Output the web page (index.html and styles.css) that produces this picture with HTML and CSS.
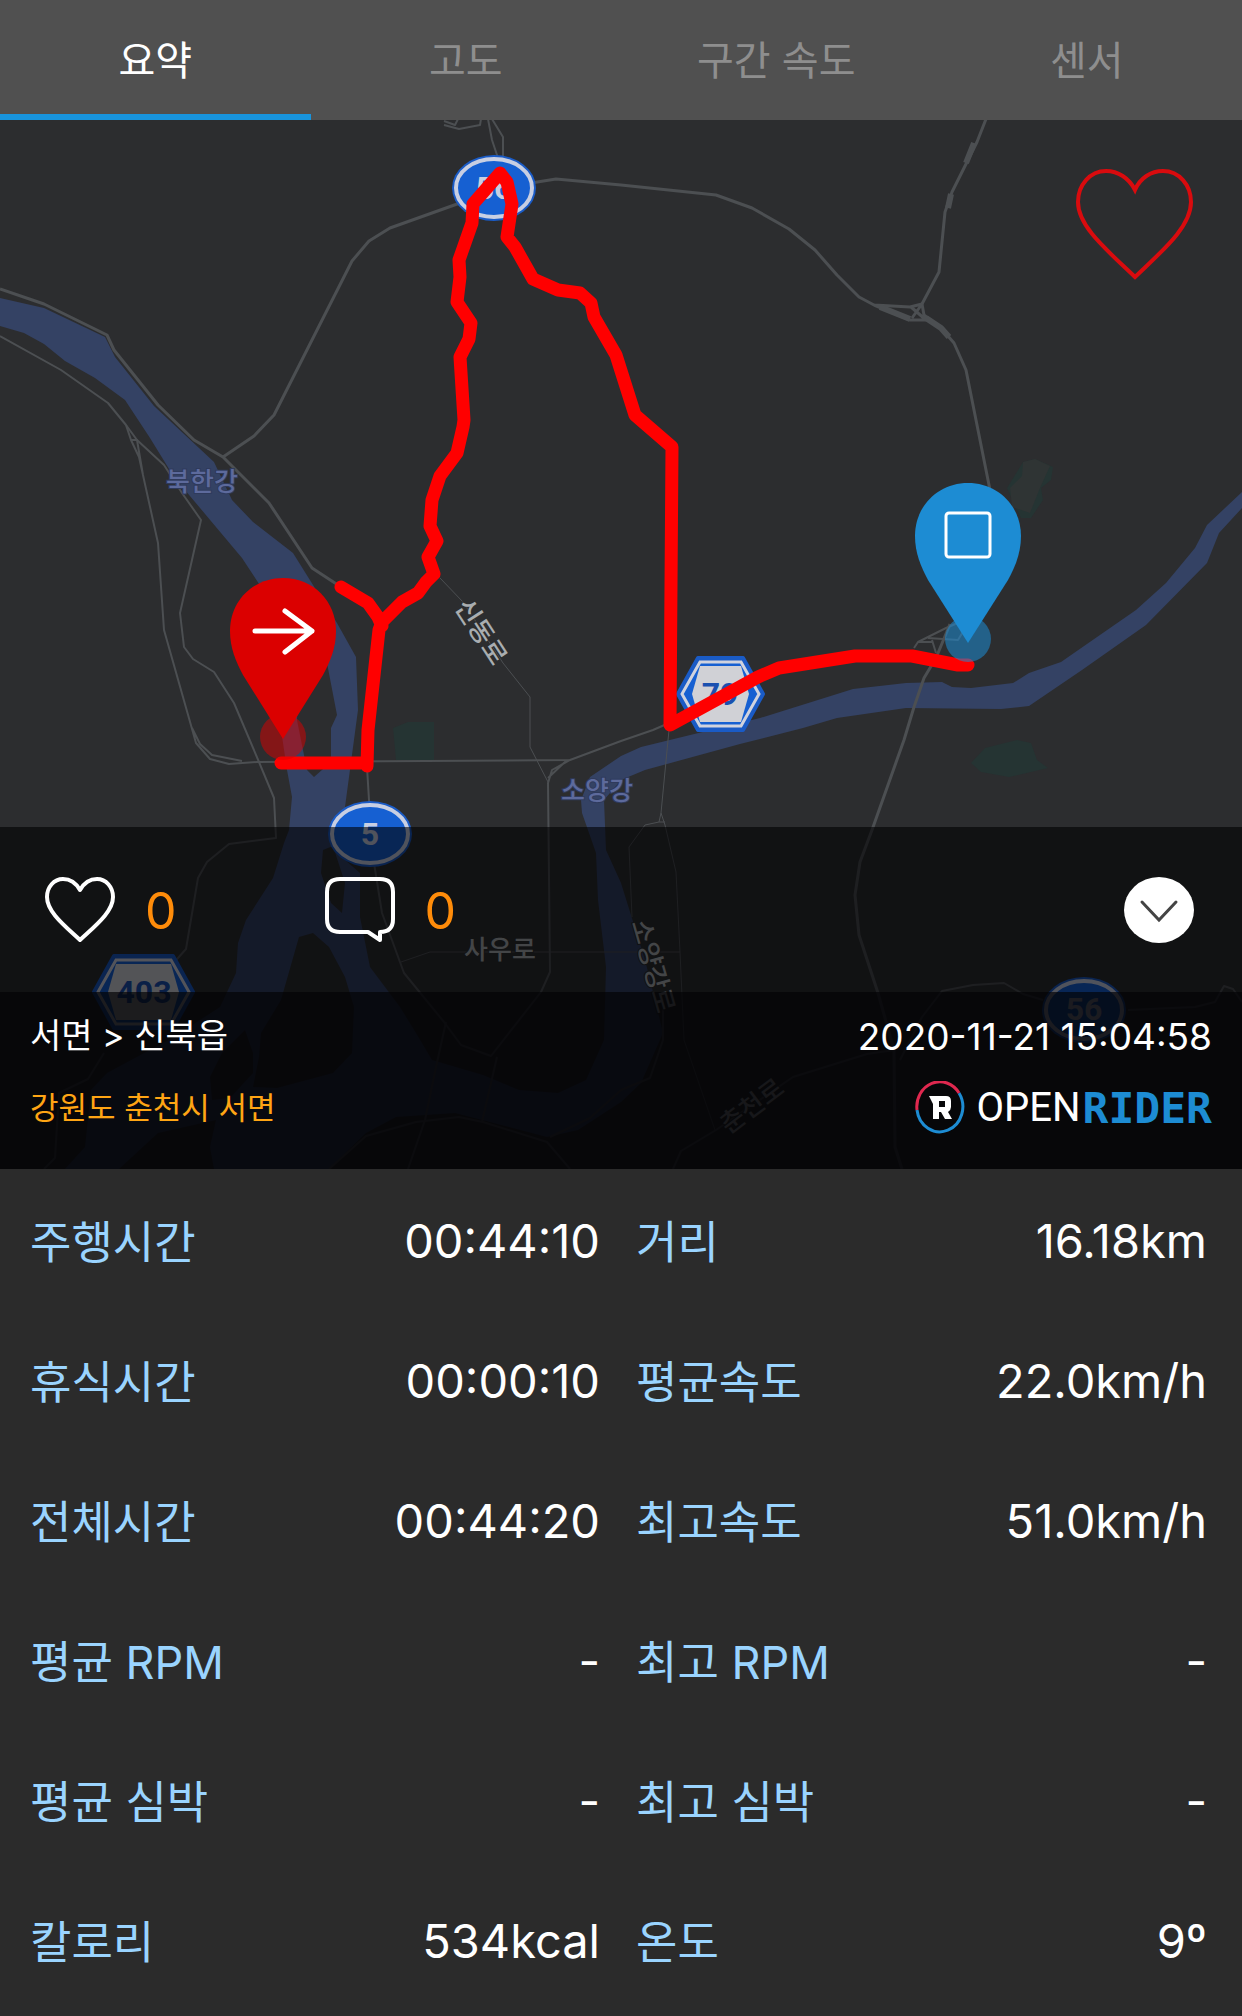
FILE: index.html
```html
<!DOCTYPE html>
<html lang="ko">
<head>
<meta charset="utf-8">
<meta name="viewport" content="width=device-width, initial-scale=1">
<title>오픈라이더 주행 요약</title>
<link rel="stylesheet" href="styles.css">
</head>
<body>
<nav class="tabs">
  <button class="tab tab-active" type="button">요약</button>
  <button class="tab" type="button">고도</button>
  <button class="tab" type="button">구간 속도</button>
  <button class="tab" type="button">센서</button>
</nav>

<main>
<section class="map">
  <svg class="map-canvas" viewBox="0 120 1242 1049" aria-label="주행 경로 지도">
    <!-- parks -->
    <g class="park">
      <path d="M393 728 408 722H434V760H396Z"/>
      <path d="M1023 462 1035 459 1053 467 1051 480 1041 488 1043 500 1031 518H1021L1007 488Z"/>
      <path d="M971 763 985 748 1017 740 1031 743 1037 760 1048 768 1009 777 981 772Z"/>
    </g>
    <path class="park-inner" d="M1023 462 1035 459 1050 466 1040 488 1030 513 1012 507 1010 488 1022 476Z"/>

    <!-- rivers -->
    <path class="river" fill-rule="evenodd" d="M0 298 44 308 105 337 115 357 154 406 214 462 232 500 253 522 293 553 313 585 337 623 356 657 358 710 345 807 345 860 360 873 360 917 370 967 400 1007 416 1033 432 1060 483 1075 519 1090 558 1093 586 1080 604 1040 606 967 598 900 596 853 582 813 581 800 590 777 621 756 641 747 760 718 853 689 906 683 942 682 952 687 971 688 1013 683 1029 673 1061 662 1136 610 1166 583 1195 548 1207 525 1242 492V508L1219 533 1207 563 1146 625 1082 670 1029 706 1001 709 906 708 837 718 803 728 740 744 645 770 621 780 604 800 606 850 621 883 645 960 655 1000 663 1033 641 1083 621 1102 578 1130 547 1137 455 1113 396 1117 366 1133 329 1169H65L85 1147 91 1090 107 1073 174 1037 220 1007 236 973 238 943 246 920 273 878 284 843 289 830 292 797 287 770 283 743 261 587 242 558 174 477 150 438 125 400 95 378 65 361 44 344 24 333 0 326Z
      M300 630 327 663 337 715 331 728V762L314 777 307 770 297 720Z
      M323 850 333 846 345 883 342 913 331 903 321 873Z
      M299 937 313 933 329 947 345 977 354 1007 352 1053 333 1073 277 1088 253 1087 259 1057 261 1033 281 1000Z
      M245 1030 222 1053 210 1077 212 1100 230 1098 253 1073V1053Z
      M216 1120 158 1133 119 1169H214L210 1147Z"/>

    <!-- roads -->
    <g class="road">
      <path d="M444 125 459 129 480 125 481 119M444 121 455 125 458 119M488 119 492 140 498 158M492 119 503 137V158"/>
      <path class="road-major" d="M531 183 556 179 621 185 716 195 752 208 789 229 815 250 837 275 859 297 874 305 910 307 922 304M874 305 910 320H926L911 307M912 318 922 304 924 315 941 328 954 343 966 370 976 420 990 490"/>
      <path class="road-major" d="M986 119 977 142 952 192 945 212 939 272 922 304"/>
      <path class="road-thick" d="M974 143 966 163M951 194 948 208M926 318 941 328 949 337M880 307 910 319"/>
      <path class="road-major" d="M460 203 390 228 369 241 352 261 274 415 254 436 223 457"/>
      <path class="road-major" d="M0 289 44 304 107 335 114 350 158 405 194 440 223 457 269 503 312 568 341 587"/>
      <path d="M0 336 61 370 108 403 126 425 137 440 164 465 182 493 201 520 180 613 184 647 193 659 214 672 234 703 259 762 274 798 276 838 229 844 207 862 198 878 186 949 170 967M104 1053 88 1079 59 1093 55 1158 44 1169"/>
      <path d="M126 425 131 440 139 457 158 543 164 630 196 743 210 759 229 764 257 762 570 760 621 741 653 730 669 723M131 440H137L143 475M192 728 200 744 212 755 242 761"/>
      <path d="M367 767 369 800 374 863 382 913 404 973 444 1022 461 1045 491 1056 541 992 550 972 548 783 552 770 570 760M548 778 566 761"/>
      <path class="road-minor" d="M440 578 463 602 503 663 530 697V747L548 782"/>
      <path class="road-minor" d="M401 962 430 952H680M669 730 661 813 659 822 645 825 629 847 632 917M661 813 665 825 676 872 680 952 684 1040 715 1130M659 822H665"/>
      <path class="road-major" d="M950 624 936 658 924 678 914 707 904 740 872 830 860 862 855 895 859 935 878 993 894 1050 895 1147 902 1169"/>
      <path d="M914 648 918 642 946 628 960 622M928 638 958 640 964 630M932 640 936 653M918 642H932"/>
      <path d="M894 1050 867 1054 793 1077 716 1130 681 1151 673 1169M900 1060 922 1017 942 991 973 985 1004 983 1023 994 1043 1000M1128 1010 1195 1007 1215 1002 1224 986 1233 989 1242 1002"/>
      <path d="M446 1022 436 1067 425 1120 408 1169M329 1169 366 1136 416 1122 459 1117 483 1122 547 1142 570 1169M497 1057 482 1122M550 1137 590 1118 621 1090 650 1078 663 1040V1000"/>
    </g>

    <!-- place and road names -->
    <g class="map-label water-label">
      <text x="202" y="491">북한강</text>
      <text x="597" y="800">소양강</text>
    </g>
    <g class="map-label road-label">
      <text x="481" y="641" transform="rotate(57 481 632)">신동로</text>
      <text x="500" y="959">사우로</text>
      <text x="653" y="975" transform="rotate(74 653 966)">소양강로</text>
      <text x="752" y="1115" transform="rotate(-37 752 1106)">춘천로</text>
    </g>

    <!-- route shields -->
    <g class="shield">
      <ellipse class="shield-edge" cx="494" cy="188" rx="42" ry="33"/><ellipse class="shield-ring" cx="494" cy="188" rx="38" ry="29"/>
      <text class="shield-light" x="494" y="199">56</text>
      <ellipse class="shield-edge" cx="370" cy="834" rx="42" ry="33"/><ellipse class="shield-ring" cx="370" cy="834" rx="38" ry="29"/>
      <text class="shield-light" x="370" y="845">5</text>
      <ellipse class="shield-edge" cx="1084" cy="1010" rx="42" ry="33"/><ellipse class="shield-ring" cx="1084" cy="1010" rx="38" ry="29"/>
      <text class="shield-light" x="1084" y="1020">56</text>
      <path class="hex-edge" d="M678 694 698 658H743L763 694 743 730H698Z"/>
      <path class="hex-ring" d="M682 694 700 662H741L759 694 741 726H700Z"/>
      <path class="hex-face" d="M692 694 700 666H741L749 694 741 722H700Z"/>
      <text class="shield-dark" x="720" y="705">79</text>
      <path class="hex-edge" d="M94 992 114 956H173L193 992 173 1028H114Z"/>
      <path class="hex-ring" d="M98 992 116 960H171L189 992 171 1024H116Z"/>
      <path class="hex-face" d="M108 992 116 964H171L179 992 171 1020H116Z"/>
      <text class="shield-dark" x="144" y="1003">403</text>
    </g>

    <!-- ridden track -->
    <path class="track" d="M281 763H367V766L368 730 379 630 382 622 402 602 418 593 426 582 434 574 428 557 437 541 430 526 432 500 440 476 457 453 463 427 464 420 460 357 469 339 471 323 457 302 460 277 459 260 472 223 473 204 500 173 507 182 512 204 507 237 515 247 533 279 558 290 580 293 591 303 594 317 616 355 635 415 672 447 670 725 758 677 779 668 855 656H912L958 665H968M341 587 368 603 378 617 382 626"/>

    <!-- start and finish pins -->
    <circle class="start-dot" cx="283" cy="737" r="23"/>
    <g transform="translate(283 578)">
      <path class="start-pin" d="M0 0C30 0 53 23 53 53C53 70 47 84 40 97L0 161L-40 97C-47 84-53 70-53 53C-53 23-30 0 0 0Z"/>
      <path class="arrow" d="M-28 53H29M2 33 29 53 2 74"/>
    </g>
    <circle class="finish-dot" cx="968" cy="639" r="23"/>
    <g transform="translate(968 483)">
      <path class="finish-pin" d="M0 0C30 0 53 23 53 53C53 70 47 84 40 97L0 160L-40 97C-47 84-53 70-53 53C-53 23-30 0 0 0Z"/>
      <rect class="stop" x="-22" y="30" width="44" height="44" rx="3"/>
    </g>
  </svg>

  <button class="favorite" type="button" aria-label="즐겨찾기">
    <svg viewBox="0 0 118 112"><path d="M59 22C53 10 42 3 30 3C14 3 2 17 2 34C2 59 32 83 59 109C86 83 115 59 115 34C115 17 103 3 87 3C75 3 64 10 59 22Z"/></svg>
  </button>

  <div class="map-footer">
    <div class="social">
      <button class="social-item" type="button" aria-label="좋아요 0">
        <svg viewBox="0 0 70 66"><path d="M35 13C31 6 25 2 18 2C9 2 2 10 2 20C2 35 20 49 35 63C50 49 68 35 68 20C68 10 61 2 52 2C45 2 39 6 35 13Z"/></svg>
        <span>0</span>
      </button>
      <button class="social-item" type="button" aria-label="댓글 0">
        <svg viewBox="0 0 70 66"><path d="M15 2H55Q68 2 68 15V42Q68 55 55 55V63L43 55H15Q2 55 2 42V15Q2 2 15 2Z"/></svg>
        <span>0</span>
      </button>
      <button class="expand" type="button" aria-label="펼치기">
        <svg viewBox="0 0 70 66"><ellipse cx="35" cy="33" rx="35" ry="33"/><path d="M18 25 35 43 52 25"/></svg>
      </button>
    </div>
    <div class="ride">
      <div class="ride-line">
        <h1 class="ride-title">서면 &gt; 신북읍</h1>
        <time class="ride-date" datetime="2020-11-21T15:04:58">2020-11-21 15:04:58</time>
      </div>
      <div class="ride-line">
        <p class="ride-region">강원도 춘천시 서면</p>
        <div class="brand">
          <svg class="brand-mark" viewBox="0 0 50 54">
            <path class="brand-blue" d="M2 29A23 25 0 1 0 44 12"/>
            <path class="brand-red" d="M2 29A23 25 0 0 1 44 12"/>
            <path class="brand-r" d="M14 15H31Q36 15 36 20V26Q36 29 33 31L37 38H30L26 31H24V38H18V23Z M24 20V26H30V20Z" fill-rule="evenodd"/>
          </svg>
          <span class="brand-open">OPEN</span><span class="brand-rider">RIDER</span>
        </div>
      </div>
    </div>
  </div>
</section>

<table class="stats">
  <tbody>
    <tr><th scope="row">주행시간</th><td>00:44:10</td><th scope="row">거리</th><td>16.18km</td></tr>
    <tr><th scope="row">휴식시간</th><td>00:00:10</td><th scope="row">평균속도</th><td>22.0km/h</td></tr>
    <tr><th scope="row">전체시간</th><td>00:44:20</td><th scope="row">최고속도</th><td>51.0km/h</td></tr>
    <tr><th scope="row">평균 RPM</th><td>-</td><th scope="row">최고 RPM</th><td>-</td></tr>
    <tr><th scope="row">평균 심박</th><td>-</td><th scope="row">최고 심박</th><td>-</td></tr>
    <tr><th scope="row">칼로리</th><td>534kcal</td><th scope="row">온도</th><td>9º</td></tr>
  </tbody>
</table>
</main>
</body>
</html>
```

FILE: styles.css
```css
* {
  box-sizing: border-box;
}

body {
  margin: 0;
  background: #2b2b2b;
  color: #fff;
  font-family: Inter, "Noto Sans CJK KR", sans-serif;
}

button {
  margin: 0;
  padding: 0;
  border: 0;
  background: none;
  color: inherit;
  font: inherit;
}

svg {
  display: block;
}

/* Tabs */
.tabs {
  display: grid;
  grid-template-columns: repeat(4, 1fr);
  height: 120px;
  background: #505050;
}

.tab {
  padding-top: 2px;
  border-top: 6px solid transparent;
  border-bottom: 6px solid transparent;
  color: #8e8e8e;
  font-size: 40px;
  line-height: 60px;
}

.tab-active {
  border-bottom-color: #1894dd;
  color: #fff;
}

/* Map */
.map {
  position: relative;
  display: grid;
}

.map-canvas {
  grid-area: 1 / 1;
  width: 100%;
  background: #2c2d2f;
}

.park { fill: #253433; }
.park-inner { fill: #2f3434; }
.river { fill: #344264; }

.road {
  fill: none;
  stroke: #4c4f52;
  stroke-width: 2;
  stroke-linejoin: round;
}

.road-major { stroke-width: 3; }
.road-thick { stroke-width: 6; }
.road-minor { stroke-width: 1; }

.map-label {
  font-family: "Noto Sans CJK KR", sans-serif;
  font-size: 26px;
  font-weight: 500;
  text-anchor: middle;
  paint-order: stroke;
  stroke: #2c2d2f;
  stroke-width: 2;
}

.water-label {
  fill: #5d6a9c;
  stroke: #2f3a5c;
}

.road-label { fill: #a9adb0; }

.shield-edge { fill: #1a5bc6; }

.shield-ring {
  fill: #1660d2;
  stroke: #c8cfe3;
  stroke-width: 4;
}

.hex-edge {
  fill: #1a5bc6;
  stroke: #1a5bc6;
  stroke-width: 4;
  stroke-linejoin: round;
}

.hex-ring {
  fill: #1660d2;
  stroke: #d0d3de;
  stroke-width: 3;
}

.hex-face { fill: #d0d1d6; }

.shield text {
  font-family: Roboto, Arial, sans-serif;
  font-size: 32px;
  font-weight: 700;
  text-anchor: middle;
}

.shield-light { fill: #c8cfe3; }
.shield-dark { fill: #1a50b0; }

.track {
  fill: none;
  stroke: #f00;
  stroke-width: 13;
  stroke-linecap: round;
  stroke-linejoin: round;
}

.start-dot { fill: rgba(219, 0, 0, 0.5); }
.start-pin { fill: #db0000; }
.finish-dot { fill: rgba(29, 140, 211, 0.55); }
.finish-pin { fill: #1d8cd3; }

.arrow,
.stop {
  fill: none;
  stroke: #fff;
  stroke-width: 5;
  stroke-linecap: round;
  stroke-linejoin: round;
}

.stop { stroke-width: 3; }

.favorite {
  position: absolute;
  top: 48px;
  right: 48px;
  width: 118px;
}

.favorite path {
  fill: none;
  stroke: #d90b0e;
  stroke-width: 4;
}

/* Panel over the lower part of the map */
.map-footer {
  grid-area: 1 / 1;
  align-self: end;
  z-index: 1;
}

.social {
  display: flex;
  align-items: center;
  gap: 148px;
  height: 165px;
  padding: 0 48px 0 45px;
  background: rgba(0, 0, 2, 0.6);
}

.social-item {
  display: flex;
  align-items: center;
  gap: 30px;
  color: #ff8c0a;
  font-size: 50px;
  font-weight: 400;
  line-height: 66px;
}

.social-item span { padding-top: 2px; }

.social svg {
  width: 70px;
}

.social-item path {
  fill: none;
  stroke: #fff;
  stroke-width: 4;
  stroke-linejoin: round;
}

.expand { margin-left: auto; }
.expand ellipse { fill: #fff; }

.expand path {
  fill: none;
  stroke: #444;
  stroke-width: 3;
  stroke-linecap: round;
}

.ride {
  display: flex;
  flex-direction: column;
  gap: 16px;
  height: 177px;
  padding: 16px 30px;
  background: rgba(2, 2, 4, 0.88);
}

.ride-line {
  display: flex;
  align-items: center;
  justify-content: space-between;
  height: 56px;
}

.ride-title,
.ride-region {
  margin: 0;
  font-size: 34px;
  font-weight: 400;
  line-height: 56px;
}

.ride-region {
  color: #ffa514;
  font-size: 31px;
}

.ride-date {
  font-size: 37px;
}

.brand {
  display: flex;
  align-items: center;
  font-family: Roboto, sans-serif;
  font-size: 40px;
  line-height: 54px;
}

.brand-mark {
  width: 50px;
  margin-right: 12px;
}

.brand-mark path { fill: none; stroke-width: 3; }
.brand-mark .brand-blue { stroke: #1d8cd3; }
.brand-mark .brand-red { stroke: #e0284f; }
.brand-mark .brand-r { fill: #fff; }

.brand-rider {
  margin-left: 2px;
  color: #1d8cd3;
  font-family: "DejaVu Sans Mono", monospace;
  font-size: 43px;
  font-weight: 700;
}

/* Ride figures */
.stats {
  width: 100%;
  border-spacing: 0;
  table-layout: fixed;
}

.stats th,
.stats td {
  height: 140px;
  padding: 0;
  font-weight: 400;
}

.stats th {
  padding-left: 30px;
  color: #9ad4ff;
  font-size: 45px;
  text-align: left;
}

.stats td {
  padding-top: 3px;
  padding-right: 21px;
  font-size: 47px;
  text-align: right;
}

.stats th ~ th { padding-left: 15px; }
.stats th ~ th ~ td { padding-right: 35px; }
```
